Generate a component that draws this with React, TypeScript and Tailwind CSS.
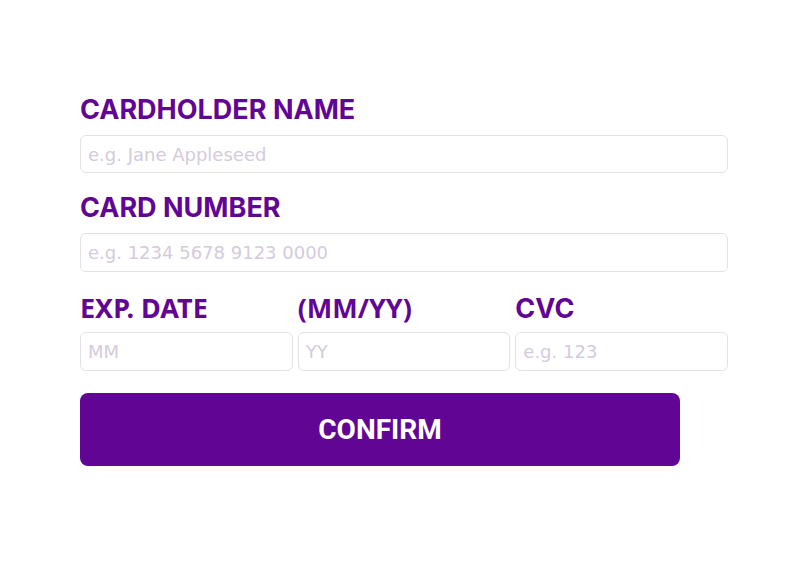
import React from "react";

const label = "text-[27px] leading-[28px] font-bold text-[#610595] [font-family:Inter,sans-serif]";
const condensed = "text-[27px] leading-[25px] font-bold text-[#610595] [font-family:'Noto_Sans',sans-serif]";
const input =
  "h-[38px] w-full rounded-md border border-[#e3e1e6] bg-white px-[7px] text-[18px] text-[#21092f] placeholder:text-[#d4cbdc] outline-none [font-family:'DejaVu_Sans',sans-serif]";

export default function App() {
  return (
    <div className="w-[794px] h-[565px] bg-white">
      <form className="w-[648px] ml-[80px] pt-[96px] flex flex-col">
        <label className={label}>CARDHOLDER NAME</label>
        <input className={`${input} mt-[11px]`} placeholder="e.g. Jane Appleseed" />
        <label className={`${label} mt-[21px]`}>CARD NUMBER</label>
        <input className={`${input} mt-[11px] h-[39px]`} placeholder="e.g. 1234 5678 9123 0000" />
        <div className="grid grid-cols-3 gap-x-[5px] mt-[23px]">
          <span className={condensed}>EXP. DATE</span>
          <span className={condensed}>(MM/YY)</span>
          <span className={label}>CVC</span>
          <input className={`${input} mt-[9px] h-[39px]`} placeholder="MM" />
          <input className={`${input} mt-[9px] h-[39px]`} placeholder="YY" />
          <input className={`${input} mt-[9px] h-[39px]`} placeholder="e.g. 123" />
        </div>
        <button
          type="button"
          className="mt-[22px] w-[600px] h-[73px] rounded-lg bg-[#610595] text-white text-[28px] font-bold [font-family:Roboto,sans-serif]"
        >
          CONFIRM
        </button>
      </form>
    </div>
  );
}
